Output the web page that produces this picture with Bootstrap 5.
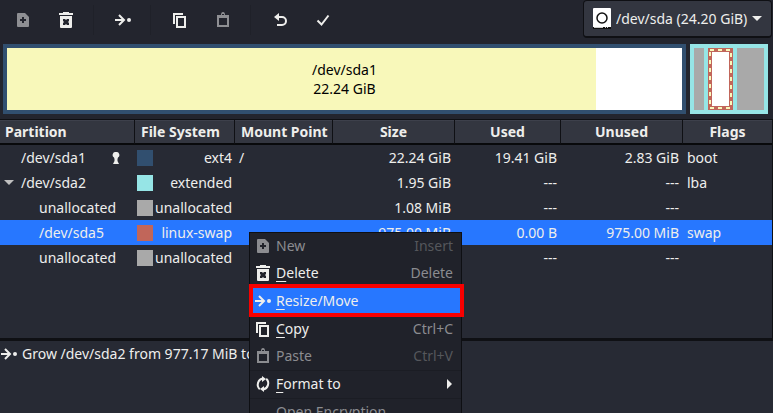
<!DOCTYPE html>
<html lang="en">
<head>
<meta charset="utf-8">
<meta name="viewport" content="width=device-width, initial-scale=1">
<title>Partition editor</title>
<link rel="stylesheet" href="https://cdn.jsdelivr.net/npm/bootstrap@5.3.0/dist/css/bootstrap.min.css">
<style>
  :root { --chrome: #23252e; --pane: #272a34; --head: #333640; --line: #0f1014; --sel: #2777ff; --fg: #eeeeec; --dim: #8b8c90; }
  body { font-family: "Noto Sans", "Open Sans", sans-serif; font-size: 14px; line-height: 19px; color: var(--fg); background: var(--chrome); }
  svg { display: block; flex: none; fill: currentColor; }
  .tools { height: 40px; padding-left: 1px; }
  .tool { width: 43px; height: 40px; padding: 0; border: 0; color: var(--fg); display: flex; align-items: center; justify-content: center; }
  .tool:disabled { color: #8e8f93; border: 0; opacity: 1; }
  .tool:hover { color: var(--sel); }
  .split { width: 1px; height: 30px; margin: 0 7px 0 6px; background: #1f2129; }
  .device { height: 38px; margin-right: 1px; padding: 0 9px; background: #333640; border: 1px solid var(--line); border-bottom-width: 2px; border-radius: 4px; }
  .device select { appearance: none; border: 0; background: transparent; color: var(--fg); padding: 0; margin: 0 4px 0 5px; outline: 0; }
  .device option { background: var(--head); }
  .disk-map { gap: 4px; margin: 4px 5px 5px 3px; height: 70px; }
  .part { border: 4px solid; color: #000; min-width: 0; }
  .part-ext4 { flex: 675 1 0; border-color: #314f6f; background: linear-gradient(90deg, #f8f8ba 87.3%, #fff 87.3%); }
  .part-ext { flex: 70 1 0; border-color: #96e5e6; background: #96e5e6; gap: 4px; }
  .gap-a { flex: 10 1 0; background: #a9a9a9; }
  .gap-b { flex: 27 1 0; background: #a9a9a9; }
  .part-swap { flex: 25 1 0; min-width: 0; height: 62px; background: #fff; }
  .list-pane { background: var(--pane); border-top: 1px solid var(--line); border-right: 1px solid var(--line); }
  .parts { width: 100%; table-layout: fixed; border-collapse: separate; border-spacing: 0; }
  .parts th { height: 25px; padding: 0 0 0 6px; background: var(--head); border-right: 1px solid var(--line); border-bottom: 2px solid #08090b; box-shadow: inset 0 1px #3d404b; text-align: left; white-space: nowrap; }
  .parts th:first-child { padding-left: 5px; }
  .parts th:last-child { border-right: 0; }
  .parts th.mid { text-align: center; padding: 0; }
  .parts td { height: 25px; padding: 0 4px; white-space: nowrap; }
  .parts td:first-child { padding: 0 15px 0 4px; }
  .parts td:nth-child(2) { padding: 0 3px 0 2px; }
  .parts .num { text-align: right; }
  .parts tr.chosen td { background: var(--sel); }
  .c1 { width: 135px; } .c2 { width: 100px; } .c3 { width: 98px; } .c4 { width: 122px; } .c5 { width: 106px; } .c6 { width: 122px; }
  .twist { width: 10px; margin-right: 7px; flex: none; }
  .child { padding-left: 18px; }
  .chip { width: 16px; height: 16px; flex: none; }
  .k-ext4 { background: #314f6f; } .k-ext { background: #96e5e6; } .k-none { background: #a9a9a9; } .k-swap { background: #c1665a; }
  .ops { height: 75px; background: var(--pane); border-top: 3px solid var(--line); padding: 3px 1px; }
  .ops ul { margin: 0; }
  .ops li { gap: 5px; }
  .context { position: absolute; left: 249px; top: 232px; width: 213px; background: #20222a; border: 1px solid #0e0f13; }
  .context .entry { height: 27px; width: 100%; padding: 0 8px 2px 5px; border: 0; background: transparent; color: var(--fg); display: flex; align-items: center; text-align: left; }
  .context .entry:disabled { color: var(--dim); }
  .context .entry:disabled kbd { color: #55575c; }
  .context .entry.active { background: var(--sel); padding-left: 6px; }
  .context kbd { margin-left: auto; padding: 0; background: transparent; color: var(--dim); font: inherit; }
  .context .pic { width: 16px; margin-right: 5px; flex: none; display: flex; justify-content: center; }
  .context u { text-underline-offset: 3px; }
  .context hr { margin: 0; border: 0; height: 1px; background: #1b1d24; opacity: 1; }
  .context .flagged { margin: 0 -3px 0 -1px; position: relative; }
  .flagged::after { content: ""; position: absolute; inset: -4px 0 -2px 0; border: 4px solid #f80000; pointer-events: none; }
</style>
<script src="https://cdn.jsdelivr.net/npm/bootstrap@5.3.0/dist/js/bootstrap.bundle.min.js"></script>
</head>
<body class="vh-100 overflow-hidden d-flex flex-column position-relative">

<svg class="d-none" aria-hidden="true">
  <symbol id="i-new" viewBox="0 0 16 16"><path fill-rule="evenodd" d="M3 1h7l4 4v9a1 1 0 0 1-1 1H3a1 1 0 0 1-1-1V2a1 1 0 0 1 1-1zm4 4v2H5v2h2v2h2V9h2V7H9V5z"/></symbol>
  <symbol id="i-del" viewBox="0 0 16 16"><path d="M1 1h4V0h6v1h4v2H1z"/><path fill-rule="evenodd" d="M2 4h12v11a1 1 0 0 1-1 1H3a1 1 0 0 1-1-1zm3 3v2l1 1-1 1v2h2l1-1 1 1h2v-2l-1-1 1-1V7H9L8 8 7 7z"/></symbol>
  <symbol id="i-move" viewBox="0 0 16 16"><path d="M0 8h9M4 3l5 5-5 5" fill="none" stroke="currentColor" stroke-width="2"/><circle cx="14" cy="8" r="2"/></symbol>
  <symbol id="i-copy" viewBox="0 0 16 16"><path d="M2 12V2h9M5 5h8v10H5z" fill="none" stroke="currentColor" stroke-width="2"/></symbol>
  <symbol id="i-paste" viewBox="0 0 16 16"><path d="M3 4h10v10H3z" fill="none" stroke="currentColor" stroke-width="2"/><path fill-rule="evenodd" d="M4 3h2a2 3 0 0 1 4 0h2v3H4zm3-1v1h2V2z"/></symbol>
  <symbol id="i-undo" viewBox="0 0 16 16"><path d="M6 5h4a4 4 0 0 1 0 8H5" fill="none" stroke="currentColor" stroke-width="2"/><path d="M2 5l5-4v8z"/></symbol>
  <symbol id="i-ok" viewBox="0 0 16 16"><path d="M2.500 8.500l4 4 7-9" fill="none" stroke="currentColor" stroke-width="2"/></symbol>
  <symbol id="i-cycle" viewBox="0 0 16 16"><path d="M4.800 13.200A6.200 6.200 0 0 1 8 2.500M11.200 2.800A6.200 6.200 0 0 1 8 13.500" fill="none" stroke="currentColor" stroke-width="2"/><path d="M7 0l4 3-4 3zM9 10v6l-4-3z"/></symbol>
</svg>

<header class="d-flex justify-content-between align-items-start">
  <div class="tools d-flex align-items-center" role="toolbar" aria-label="Partition actions">
    <button class="btn tool" type="button" aria-label="New" disabled><svg width="16" height="16"><use href="#i-new"/></svg></button>
    <button class="btn tool" type="button" aria-label="Delete"><svg width="16" height="16"><use href="#i-del"/></svg></button>
    <span class="split"></span>
    <button class="btn tool" type="button" aria-label="Resize/Move"><svg width="16" height="16"><use href="#i-move"/></svg></button>
    <span class="split"></span>
    <button class="btn tool" type="button" aria-label="Copy"><svg width="16" height="16"><use href="#i-copy"/></svg></button>
    <button class="btn tool" type="button" aria-label="Paste" disabled><svg width="16" height="16"><use href="#i-paste"/></svg></button>
    <span class="split"></span>
    <button class="btn tool" type="button" aria-label="Undo"><svg width="16" height="16"><use href="#i-undo"/></svg></button>
    <button class="btn tool" type="button" aria-label="Apply"><svg width="16" height="16"><use href="#i-ok"/></svg></button>
  </div>
  <label class="device d-flex align-items-center mt-0">
    <svg width="18" height="22" viewBox="0 0 18 22"><rect width="18" height="20" rx="1" fill="#fff"/><path d="M0 19h18v2H0z" fill="#111"/><path d="M1 19h9v1H1zM12 19h1v1h-1zM14 19h1v1h-1z" fill="#ccc"/><circle cx="9" cy="10" r="5" fill="#fff" stroke="#111" stroke-width="1.500"/></svg>
    <select aria-label="Device"><option>/dev/sda (24.20 GiB)</option></select>
    <svg width="10" height="6" viewBox="0 0 10 6"><path d="M0 0h10L5 5z"/></svg>
  </label>
</header>

<section class="disk-map d-flex" aria-label="Disk layout">
  <div class="part part-ext4 d-flex flex-column align-items-center justify-content-center">
    <div>/dev/sda1</div>
    <div>22.24 GiB</div>
  </div>
  <div class="part part-ext d-flex">
    <div class="gap-a"></div>
    <svg class="part-swap"><rect x="2" y="2" style="width:calc(100% - 4px);height:calc(100% - 4px)" fill="none" stroke="#c1665a" stroke-width="4"/><rect x="2" y="2" style="width:calc(100% - 4px);height:calc(100% - 4px)" fill="none" stroke="#f8f8ba" stroke-width="2" stroke-dasharray="4"/></svg>
    <div class="gap-b"></div>
  </div>
</section>

<main class="list-pane flex-grow-1">
  <table class="parts">
    <colgroup><col class="c1"><col class="c2"><col class="c3"><col class="c4"><col class="c5"><col class="c6"><col></colgroup>
    <thead>
      <tr><th>Partition</th><th>File System</th><th>Mount Point</th><th class="mid">Size</th><th class="mid">Used</th><th class="mid">Unused</th><th class="mid">Flags</th></tr>
    </thead>
    <tbody>
      <tr>
        <td><div class="d-flex align-items-center"><span class="twist"></span>/dev/sda1<svg class="ms-auto" width="8" height="12" viewBox="0 0 8 12"><path d="M4 0a3 3 0 0 1 2 5.500L5.500 7v2L7 12H1l1.500-3V7L2 5.500A3 3 0 0 1 4 0z"/></svg></div></td>
        <td><div class="d-flex align-items-center justify-content-between"><span class="chip k-ext4"></span>ext4</div></td>
        <td>/</td><td class="num">22.24 GiB</td><td class="num">19.41 GiB</td><td class="num">2.83 GiB</td><td>boot</td>
      </tr>
      <tr>
        <td><div class="d-flex align-items-center"><svg class="twist" height="6" viewBox="0 0 10 6" fill="#c0c0c0"><path fill="#c0c0c0" d="M0 0h10L5 5z"/></svg>/dev/sda2</div></td>
        <td><div class="d-flex align-items-center justify-content-between"><span class="chip k-ext"></span>extended</div></td>
        <td></td><td class="num">1.95 GiB</td><td class="num">---</td><td class="num">---</td><td>lba</td>
      </tr>
      <tr>
        <td><div class="d-flex align-items-center child"><span class="twist"></span>unallocated</div></td>
        <td><div class="d-flex align-items-center justify-content-between"><span class="chip k-none"></span>unallocated</div></td>
        <td></td><td class="num">1.08 MiB</td><td class="num">---</td><td class="num">---</td><td></td>
      </tr>
      <tr class="chosen">
        <td><div class="d-flex align-items-center child"><span class="twist"></span>/dev/sda5</div></td>
        <td><div class="d-flex align-items-center justify-content-between"><span class="chip k-swap"></span>linux-swap</div></td>
        <td></td><td class="num">975.00 MiB</td><td class="num">0.00 B</td><td class="num">975.00 MiB</td><td>swap</td>
      </tr>
      <tr>
        <td><div class="d-flex align-items-center child"><span class="twist"></span>unallocated</div></td>
        <td><div class="d-flex align-items-center justify-content-between"><span class="chip k-none"></span>unallocated</div></td>
        <td></td><td></td><td class="num">---</td><td class="num">---</td><td></td>
      </tr>
    </tbody>
  </table>
</main>

<section class="ops" aria-label="Pending operations">
  <ul class="list-unstyled">
    <li class="d-flex align-items-center"><svg width="16" height="16"><use href="#i-move"/></svg><span>Grow /dev/sda2 from 977.17 MiB to</span></li>
  </ul>
</section>

<div class="context" role="menu">
  <button class="entry" type="button" role="menuitem" disabled><span class="pic"><svg width="16" height="16"><use href="#i-new"/></svg></span>New<kbd>Insert</kbd></button>
  <button class="entry" type="button" role="menuitem"><span class="pic"><svg width="16" height="16"><use href="#i-del"/></svg></span><span><u>D</u>elete</span><kbd>Delete</kbd></button>
  <hr>
  <div class="flagged"><button class="entry active" type="button" role="menuitem"><span class="pic"><svg width="16" height="16"><use href="#i-move"/></svg></span><span><u>R</u>esize/Move</span></button></div>
  <hr>
  <button class="entry" type="button" role="menuitem"><span class="pic"><svg width="16" height="16"><use href="#i-copy"/></svg></span><span><u>C</u>opy</span><kbd>Ctrl+C</kbd></button>
  <button class="entry" type="button" role="menuitem" disabled><span class="pic"><svg width="16" height="16"><use href="#i-paste"/></svg></span>Paste<kbd>Ctrl+V</kbd></button>
  <hr>
  <button class="entry" type="button" role="menuitem"><span class="pic"><svg width="16" height="16"><use href="#i-cycle"/></svg></span><span><u>F</u>ormat to</span><svg class="ms-auto" width="6" height="10" viewBox="0 0 6 10"><path d="M0 0l5 5-5 5z"/></svg></button>
  <hr>
  <button class="entry" type="button" role="menuitem" disabled><span class="pic"></span>Open Encryption</button>
</div>

</body>
</html>
